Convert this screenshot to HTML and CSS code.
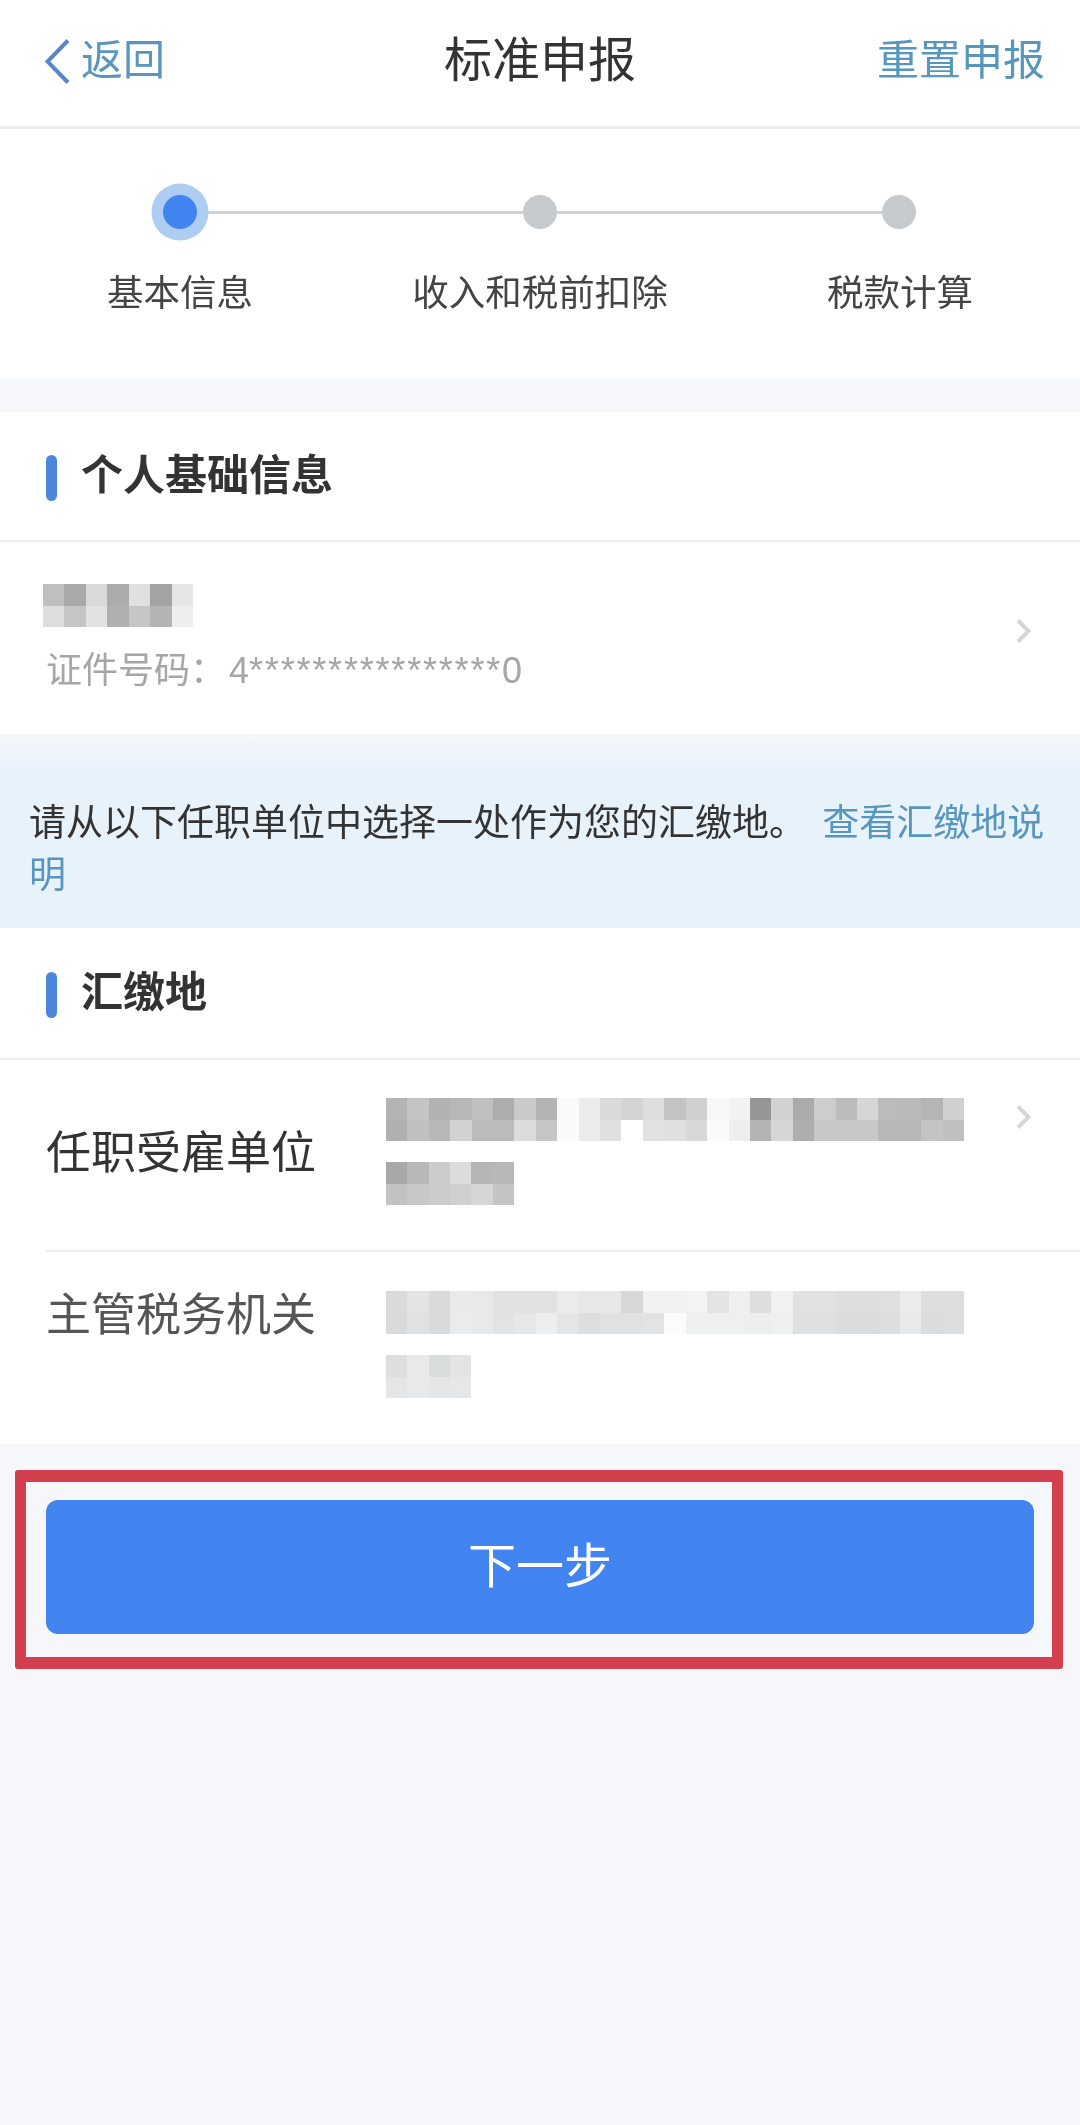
FILE: index.html
```html
<!DOCTYPE html>
<html lang="zh-CN">
<head>
<meta charset="utf-8">
<title>标准申报</title>
<link rel="stylesheet" href="styles.css">
</head>
<body>
<div class="page">
  <header class="topbar">
    <a class="back">
      <svg class="back-icon" viewBox="0 0 25 45" width="25" height="45"><path d="M23 1.5 L2.5 22.5 L23 43.5" fill="none" stroke="#5a86c8" stroke-width="4"/></svg>
      <span>返回</span>
    </a>
    <h1 class="title">标准申报</h1>
    <a class="reset">重置申报</a>
  </header>

  <section class="steps">
    <div class="track">
      <span class="dot dot-active"></span>
      <span class="line"></span>
      <span class="dot"></span>
      <span class="line"></span>
      <span class="dot"></span>
    </div>
    <div class="labels">
      <span>基本信息</span>
      <span>收入和税前扣除</span>
      <span>税款计算</span>
    </div>
  </section>

  <section class="card card-first">
    <div class="card-head head-a"><i class="bar"></i><h2>个人基础信息</h2></div>
    <div class="person">
      <div class="person-info">
        <svg class="mosaic m-name" viewBox="0 0 7 2" preserveAspectRatio="none" shape-rendering="crispEdges">
          <rect x="0" y="0" width="1" height="1" fill="#bfbfbf"/><rect x="1" y="0" width="1" height="1" fill="#a9a9a9"/><rect x="2" y="0" width="1" height="1" fill="#d9d9d9"/><rect x="3" y="0" width="1" height="1" fill="#acacac"/><rect x="4" y="0" width="1" height="1" fill="#e0e0e0"/><rect x="5" y="0" width="1" height="1" fill="#a3a3a3"/><rect x="6" y="0" width="1" height="1" fill="#e6e6e6"/>
          <rect x="0" y="1" width="1" height="1" fill="#dedede"/><rect x="1" y="1" width="1" height="1" fill="#c6c6c6"/><rect x="2" y="1" width="1" height="1" fill="#e2e2e2"/><rect x="3" y="1" width="1" height="1" fill="#b0b0b0"/><rect x="4" y="1" width="1" height="1" fill="#c6c6c6"/><rect x="5" y="1" width="1" height="1" fill="#b4b4b4"/><rect x="6" y="1" width="1" height="1" fill="#eeeeee"/>
        </svg>
        <p class="idno"><span>证件号码：</span><span class="id-first">4</span><span class="stars">****************</span>0</p>
      </div>
      <svg class="chev chev-person" viewBox="0 0 15 24" width="15" height="24"><path d="M2 1.5 L12.5 12 L2 22.5" fill="none" stroke="#d6d6d6" stroke-width="4"/></svg>
    </div>
  </section>

  <p class="notice">请从以下任职单位中选择一处作为您的汇缴地。 <a class="link">查看汇缴地说明</a></p>

  <section class="card">
    <div class="card-head head-b"><i class="bar"></i><h2>汇缴地</h2></div>
    <div class="field field-a">
      <span class="field-label label-a">任职受雇单位</span>
      <div class="field-value">
        <svg class="mosaic m-long" viewBox="0 0 27 2" preserveAspectRatio="none" shape-rendering="crispEdges">
          <rect x="0" y="0" width="1" height="1" fill="#b3b3b3"/><rect x="1" y="0" width="1" height="1" fill="#c4c4c4"/><rect x="2" y="0" width="1" height="1" fill="#b2b2b2"/><rect x="3" y="0" width="1" height="1" fill="#b7b7b7"/><rect x="4" y="0" width="1" height="1" fill="#c0c0c0"/><rect x="5" y="0" width="1" height="1" fill="#adadad"/><rect x="6" y="0" width="1" height="1" fill="#cacaca"/><rect x="7" y="0" width="1" height="1" fill="#b4b4b4"/><rect x="8" y="0" width="1" height="1" fill="#fafafa"/><rect x="9" y="0" width="1" height="1" fill="#ececec"/><rect x="10" y="0" width="1" height="1" fill="#dadada"/><rect x="11" y="0" width="1" height="1" fill="#d4d4d4"/><rect x="12" y="0" width="1" height="1" fill="#dedede"/><rect x="13" y="0" width="1" height="1" fill="#c4c4c4"/><rect x="14" y="0" width="1" height="1" fill="#cfcfcf"/><rect x="15" y="0" width="1" height="1" fill="#f8f8f8"/><rect x="16" y="0" width="1" height="1" fill="#f2f2f2"/><rect x="17" y="0" width="1" height="1" fill="#969696"/><rect x="18" y="0" width="1" height="1" fill="#d2d2d2"/><rect x="19" y="0" width="1" height="1" fill="#ababab"/><rect x="20" y="0" width="1" height="1" fill="#cdcdcd"/><rect x="21" y="0" width="1" height="1" fill="#bcbcbc"/><rect x="22" y="0" width="1" height="1" fill="#d6d6d6"/><rect x="23" y="0" width="1" height="1" fill="#bbbbbb"/><rect x="24" y="0" width="1" height="1" fill="#bababa"/><rect x="25" y="0" width="1" height="1" fill="#b5b5b5"/><rect x="26" y="0" width="1" height="1" fill="#d0d0d0"/>
          <rect x="0" y="1" width="1" height="1" fill="#b0b0b0"/><rect x="1" y="1" width="1" height="1" fill="#c0c0c0"/><rect x="2" y="1" width="1" height="1" fill="#b8b8b8"/><rect x="3" y="1" width="1" height="1" fill="#d2d2d2"/><rect x="4" y="1" width="1" height="1" fill="#bcbcbc"/><rect x="5" y="1" width="1" height="1" fill="#bcbcbc"/><rect x="6" y="1" width="1" height="1" fill="#dcdcdc"/><rect x="7" y="1" width="1" height="1" fill="#c6c6c6"/><rect x="8" y="1" width="1" height="1" fill="#fafafa"/><rect x="9" y="1" width="1" height="1" fill="#ececec"/><rect x="10" y="1" width="1" height="1" fill="#e0e0e0"/><rect x="11" y="1" width="1" height="1" fill="#ffffff"/><rect x="12" y="1" width="1" height="1" fill="#e2e2e2"/><rect x="13" y="1" width="1" height="1" fill="#e0e0e0"/><rect x="14" y="1" width="1" height="1" fill="#d8d8d8"/><rect x="15" y="1" width="1" height="1" fill="#fafafa"/><rect x="16" y="1" width="1" height="1" fill="#eeeeee"/><rect x="17" y="1" width="1" height="1" fill="#b4b4b4"/><rect x="18" y="1" width="1" height="1" fill="#d6d6d6"/><rect x="19" y="1" width="1" height="1" fill="#aeaeae"/><rect x="20" y="1" width="1" height="1" fill="#c8c8c8"/><rect x="21" y="1" width="1" height="1" fill="#c8c8c8"/><rect x="22" y="1" width="1" height="1" fill="#c8c8c8"/><rect x="23" y="1" width="1" height="1" fill="#b8b8b8"/><rect x="24" y="1" width="1" height="1" fill="#b8b8b8"/><rect x="25" y="1" width="1" height="1" fill="#c4c4c4"/><rect x="26" y="1" width="1" height="1" fill="#c0c0c0"/>
        </svg>
        <svg class="mosaic m-six" viewBox="0 0 6 2" preserveAspectRatio="none" shape-rendering="crispEdges">
          <rect x="0" y="0" width="1" height="1" fill="#a8a8a8"/><rect x="1" y="0" width="1" height="1" fill="#b8b8b8"/><rect x="2" y="0" width="1" height="1" fill="#cccccc"/><rect x="3" y="0" width="1" height="1" fill="#dcdcdc"/><rect x="4" y="0" width="1" height="1" fill="#b6b6b6"/><rect x="5" y="0" width="1" height="1" fill="#b8b8b8"/>
          <rect x="0" y="1" width="1" height="1" fill="#c2c2c2"/><rect x="1" y="1" width="1" height="1" fill="#c8c8c8"/><rect x="2" y="1" width="1" height="1" fill="#cccccc"/><rect x="3" y="1" width="1" height="1" fill="#d0d0d0"/><rect x="4" y="1" width="1" height="1" fill="#d6d6d6"/><rect x="5" y="1" width="1" height="1" fill="#c4c4c4"/>
        </svg>
      </div>
      <svg class="chev chev-field" viewBox="0 0 15 24" width="15" height="24"><path d="M2 1.5 L12.5 12 L2 22.5" fill="none" stroke="#d6d6d6" stroke-width="4"/></svg>
    </div>
    <div class="field field-b">
      <span class="field-label label-b">主管税务机关</span>
      <div class="field-value">
        <svg class="mosaic m-long" viewBox="0 0 27 2" preserveAspectRatio="none" shape-rendering="crispEdges">
          <rect x="0" y="0" width="1" height="1" fill="#d8dadb"/><rect x="1" y="0" width="1" height="1" fill="#e2e3e4"/><rect x="2" y="0" width="1" height="1" fill="#d8dadc"/><rect x="3" y="0" width="1" height="1" fill="#e8eaeb"/><rect x="4" y="0" width="1" height="1" fill="#e8e9ea"/><rect x="5" y="0" width="1" height="1" fill="#e0e1e3"/><rect x="6" y="0" width="1" height="1" fill="#e0e1e3"/><rect x="7" y="0" width="1" height="1" fill="#e0e1e3"/><rect x="8" y="0" width="1" height="1" fill="#eaebec"/><rect x="9" y="0" width="1" height="1" fill="#e6e7e8"/><rect x="10" y="0" width="1" height="1" fill="#e6e7e8"/><rect x="11" y="0" width="1" height="1" fill="#d6d8da"/><rect x="12" y="0" width="1" height="1" fill="#f0f1f1"/><rect x="13" y="0" width="1" height="1" fill="#f0f1f1"/><rect x="14" y="0" width="1" height="1" fill="#f2f3f3"/><rect x="15" y="0" width="1" height="1" fill="#e2e3e4"/><rect x="16" y="0" width="1" height="1" fill="#eeefef"/><rect x="17" y="0" width="1" height="1" fill="#dcdedf"/><rect x="18" y="0" width="1" height="1" fill="#f0f1f1"/><rect x="19" y="0" width="1" height="1" fill="#e0e1e3"/><rect x="20" y="0" width="1" height="1" fill="#e0e1e3"/><rect x="21" y="0" width="1" height="1" fill="#dcdedf"/><rect x="22" y="0" width="1" height="1" fill="#dcdedf"/><rect x="23" y="0" width="1" height="1" fill="#dedfe1"/><rect x="24" y="0" width="1" height="1" fill="#eaebec"/><rect x="25" y="0" width="1" height="1" fill="#dcdedf"/><rect x="26" y="0" width="1" height="1" fill="#dcdedf"/>
          <rect x="0" y="1" width="1" height="1" fill="#d8dadb"/><rect x="1" y="1" width="1" height="1" fill="#e0e1e3"/><rect x="2" y="1" width="1" height="1" fill="#d8dadc"/><rect x="3" y="1" width="1" height="1" fill="#eaebec"/><rect x="4" y="1" width="1" height="1" fill="#e8e9ea"/><rect x="5" y="1" width="1" height="1" fill="#e2e3e4"/><rect x="6" y="1" width="1" height="1" fill="#e6e7e8"/><rect x="7" y="1" width="1" height="1" fill="#ecedee"/><rect x="8" y="1" width="1" height="1" fill="#e4e5e6"/><rect x="9" y="1" width="1" height="1" fill="#dcdedf"/><rect x="10" y="1" width="1" height="1" fill="#e0e1e3"/><rect x="11" y="1" width="1" height="1" fill="#e0e1e3"/><rect x="12" y="1" width="1" height="1" fill="#e2e3e4"/><rect x="13" y="1" width="1" height="1" fill="#fbfbfb"/><rect x="14" y="1" width="1" height="1" fill="#eff0f0"/><rect x="15" y="1" width="1" height="1" fill="#eeefef"/><rect x="16" y="1" width="1" height="1" fill="#eeefef"/><rect x="17" y="1" width="1" height="1" fill="#eceded"/><rect x="18" y="1" width="1" height="1" fill="#eff0f0"/><rect x="19" y="1" width="1" height="1" fill="#dfe0e2"/><rect x="20" y="1" width="1" height="1" fill="#dfe0e2"/><rect x="21" y="1" width="1" height="1" fill="#dadcde"/><rect x="22" y="1" width="1" height="1" fill="#dadcde"/><rect x="23" y="1" width="1" height="1" fill="#dcdedf"/><rect x="24" y="1" width="1" height="1" fill="#e8e9ea"/><rect x="25" y="1" width="1" height="1" fill="#dadcde"/><rect x="26" y="1" width="1" height="1" fill="#dcdedf"/>
        </svg>
        <svg class="mosaic m-four" viewBox="0 0 4 2" preserveAspectRatio="none" shape-rendering="crispEdges">
          <rect x="0" y="0" width="1" height="1" fill="#dcdedf"/><rect x="1" y="0" width="1" height="1" fill="#e8e9ea"/><rect x="2" y="0" width="1" height="1" fill="#d8dcdd"/><rect x="3" y="0" width="1" height="1" fill="#e2e4e4"/>
          <rect x="0" y="1" width="1" height="1" fill="#e4e5e6"/><rect x="1" y="1" width="1" height="1" fill="#e8e9ea"/><rect x="2" y="1" width="1" height="1" fill="#e4e5e6"/><rect x="3" y="1" width="1" height="1" fill="#e6e7e8"/>
        </svg>
      </div>
    </div>
  </section>

  <div class="highlight">
    <button class="next" type="button">下一步</button>
  </div>
</div>
</body>
</html>
```

FILE: styles.css
```css
* { box-sizing: border-box; }
html, body { margin: 0; padding: 0; }
body {
  width: 1080px;
  min-height: 2125px;
  background: #f5f7fb;
  font-family: "Liberation Sans", "Noto Sans CJK SC", sans-serif;
  color: #333;
}
.page { width: 1080px; min-height: 2125px; filter: blur(0.6px); }
h1, h2, p { margin: 0; font-weight: normal; }

.topbar {
  display: grid;
  grid-template-columns: 1fr auto 1fr;
  align-items: center;
  height: 129px;
  padding: 0 35px 4px 35px;
  background: #fff;
  border-bottom: 3px solid #ececec;
}
.back { display: flex; align-items: center; gap: 11px; margin-left: 10px; font-size: 42px; line-height: 50px; color: #5796bd; }
.title { font-size: 48px; line-height: 60px; color: #333; }
.reset { justify-self: end; font-size: 42px; line-height: 50px; color: #5796bd; }

.steps { background: #fff; padding: 66px 0 59px; }
.track { display: flex; align-items: center; padding: 0 164px 0 163px; }
.dot { flex: none; width: 34px; height: 34px; border-radius: 50%; background: #c7cacd; }
.dot-active { position: relative; background: #4285f0; box-shadow: 0 0 0 11.5px #aecdf3; }
.line { flex: 1; height: 3px; background: #cfd1d4; }
.labels {
  display: grid;
  grid-template-columns: repeat(3, 360px);
  margin-top: 40px;
  font-size: 36.5px;
  line-height: 50px;
  color: #444;
  text-align: center;
}

.card { background: #fff; }
.card-first { margin-top: 34px; }
.card-head {
  display: flex;
  align-items: center;
  gap: 24px;
  padding-left: 46px;
  border-bottom: 2px solid #ebebeb;
}
.head-a { height: 130px; }
.head-b { height: 132px; }
.bar { flex: none; width: 11px; height: 46px; border-radius: 6px; background: #4d87dc; margin-top: 4px; }
.card-head h2 { font-size: 42px; line-height: 50px; font-weight: bold; color: #333; }

.person {
  display: flex;
  justify-content: space-between;
  align-items: flex-start;
  padding: 42px 49px 38px 43px;
}
.mosaic { display: block; height: 43px; }
.m-name { width: 150px; }
.m-long { width: 578px; }
.m-six { width: 128px; margin-top: 21px; }
.m-four { width: 85px; margin-top: 21px; }
.idno { margin: 19px 0 0 3px; font-size: 36px; line-height: 50px; color: #a6a6a6; }
.id-first { margin-left: 3px; }
.stars { letter-spacing: 1.8px; }
.chev { flex: none; }
.chev-person { margin-top: 35px; }
.chev-field { margin: 7px 0 0 52px; }

.notice {
  padding: 64px 20px 26px 29px;
  font-size: 37px;
  line-height: 52px;
  color: #333;
  background: linear-gradient(#f5f7fb 0, #e7f2fb 41px);
}
.link { color: #5796bd; margin-left: 6px; }

.field { display: flex; margin-left: 46px; }
.field-a { padding: 38px 0 45px; border-bottom: 2px solid #ebebeb; }
.field-b { padding: 39px 0 46px; }
.field-label { width: 340px; flex: none; font-size: 45px; line-height: 60px; }
.label-a { color: #333; margin-top: 26px; }
.label-b { color: #555; margin-top: -5px; }

.highlight {
  margin: 26px 17px 0 15px;
  border: solid #d33f4c;
  border-width: 12px 11px;
  border-radius: 3px;
  padding: 18px 18px 23px 20px;
}
.next {
  display: block;
  width: 100%;
  height: 134px;
  border: 0;
  border-radius: 12px;
  background: #4285f0;
  color: #fff;
  font: inherit;
  font-size: 48px;
  line-height: 60px;
  padding: 0;
}
```
